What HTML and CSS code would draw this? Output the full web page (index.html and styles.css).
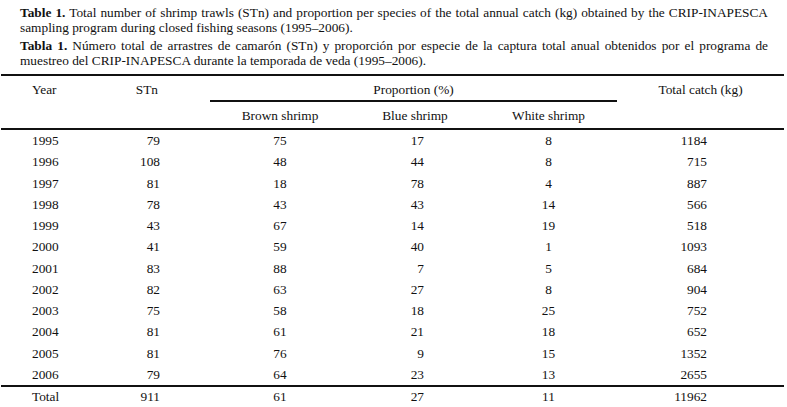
FILE: index.html
```html
<!DOCTYPE html>
<html lang="en">
<head>
<meta charset="utf-8">
<title>Table 1</title>
<link rel="stylesheet" href="styles.css">
</head>
<body>
<div class="caption">
  <p class="cap"><span class="line just"><b>Table 1.</b> Total number of shrimp trawls (STn) and proportion per species of the total annual catch (kg) obtained by the CRIP-INAPESCA</span><span class="line">sampling program during closed fishing seasons (1995–2006).</span></p>
  <p class="cap" lang="es"><span class="line just"><b>Tabla 1.</b> Número total de arrastres de camarón (STn) y proporción por especie de la captura total anual obtenidos por el programa de</span><span class="line">muestreo del CRIP-INAPESCA durante la temporada de veda (1995–2006).</span></p>
</div>
<table class="data">
  <colgroup>
    <col class="c-year"><col class="c-stn"><col class="c-brown"><col class="c-blue"><col class="c-white"><col class="c-total">
  </colgroup>
  <thead>
    <tr class="hrow1">
      <th rowspan="2" class="hs h-year">Year</th>
      <th rowspan="2" class="hs h-stn">STn</th>
      <th colspan="3" class="hg">Proportion (%)</th>
      <th rowspan="2" class="hs h-total">Total catch (kg)</th>
    </tr>
    <tr class="hrow2">
      <th class="hsub">Brown shrimp</th>
      <th class="hsub">Blue shrimp</th>
      <th class="hsub">White shrimp</th>
    </tr>
  </thead>
  <tbody>
    <tr><td class="year">1995</td><td class="stn">79</td><td class="brown">75</td><td class="blue">17</td><td class="white">8</td><td class="total">1184</td></tr>
    <tr><td class="year">1996</td><td class="stn">108</td><td class="brown">48</td><td class="blue">44</td><td class="white">8</td><td class="total">715</td></tr>
    <tr><td class="year">1997</td><td class="stn">81</td><td class="brown">18</td><td class="blue">78</td><td class="white">4</td><td class="total">887</td></tr>
    <tr><td class="year">1998</td><td class="stn">78</td><td class="brown">43</td><td class="blue">43</td><td class="white">14</td><td class="total">566</td></tr>
    <tr><td class="year">1999</td><td class="stn">43</td><td class="brown">67</td><td class="blue">14</td><td class="white">19</td><td class="total">518</td></tr>
    <tr><td class="year">2000</td><td class="stn">41</td><td class="brown">59</td><td class="blue">40</td><td class="white">1</td><td class="total">1093</td></tr>
    <tr><td class="year">2001</td><td class="stn">83</td><td class="brown">88</td><td class="blue">7</td><td class="white">5</td><td class="total">684</td></tr>
    <tr><td class="year">2002</td><td class="stn">82</td><td class="brown">63</td><td class="blue">27</td><td class="white">8</td><td class="total">904</td></tr>
    <tr><td class="year">2003</td><td class="stn">75</td><td class="brown">58</td><td class="blue">18</td><td class="white">25</td><td class="total">752</td></tr>
    <tr><td class="year">2004</td><td class="stn">81</td><td class="brown">61</td><td class="blue">21</td><td class="white">18</td><td class="total">652</td></tr>
    <tr><td class="year">2005</td><td class="stn">81</td><td class="brown">76</td><td class="blue">9</td><td class="white">15</td><td class="total">1352</td></tr>
    <tr><td class="year">2006</td><td class="stn">79</td><td class="brown">64</td><td class="blue">23</td><td class="white">13</td><td class="total">2655</td></tr>
  </tbody>
  <tfoot>
    <tr class="sum"><td class="year">Total</td><td class="stn">911</td><td class="brown">61</td><td class="blue">27</td><td class="white">11</td><td class="total">11962</td></tr>
  </tfoot>
</table>
</body>
</html>
```

FILE: styles.css
```css
html, body {
  margin: 0;
  padding: 0;
  background: #ffffff;
}

body {
  font-family: "Liberation Serif", "Times New Roman", "DejaVu Serif", serif;
  font-size: 13.33px;
  color: #111111;
  overflow: hidden;
}

.caption {
  padding: 5px 0 0 20px;
  width: 748px;
}

.cap {
  margin: 0 0 3px 0;
  line-height: 15px;
}

.cap:last-child {
  margin-bottom: 0;
}

.line {
  display: block;
  white-space: nowrap;
}

.line.just {
  text-align: justify;
  text-align-last: justify;
  white-space: normal;
}

.data {
  margin: 6px 0 0 1px;
  width: 783px;
  table-layout: fixed;
  border-collapse: separate;
  border-spacing: 0;
  line-height: 15px;
}

.c-year { width: 104px; }
.c-stn { width: 105px; }
.c-brown { width: 140px; }
.c-blue { width: 130px; }
.c-white { width: 137px; }
.c-total { width: 167px; }

/* header */
.data th.hs,
.data th.hg,
.data th.hsub {
  font-weight: normal;
  box-sizing: border-box;
}

.data th.hs {
  vertical-align: top;
  border-top: 2px solid #111;
  border-bottom: 2px solid #111;
  padding: 6px 0 0 0;
}

.data th.h-year {
  text-align: left;
  padding-left: 31px;
}

.data th.h-stn {
  text-align: right;
  padding-right: 52px;
}

.data th.h-total {
  text-align: center;
}

.data th.hg {
  border-top: 2px solid #111;
  border-bottom: 2px solid #111;
  height: 28px;
  padding: 6px 0 0 0;
  vertical-align: top;
  text-align: center;
}

.data th.hsub {
  text-align: center;
  vertical-align: top;
  border-bottom: 2px solid #111;
  height: 28px;
  padding: 6px 0 0 0;
}

/* body */
.data td {
  padding: 0;
  height: 21.25px;
  line-height: 21.25px;
  vertical-align: middle;
}

.data td.year {
  text-align: left;
  padding-left: 31px;
}

.data td.stn {
  text-align: right;
  padding-right: 50px;
}

.data td.brown {
  text-align: center;
}

.data td.blue {
  text-align: right;
  padding-right: 56px;
}

.data td.white {
  text-align: center;
}

.data td.total {
  text-align: right;
  padding-right: 77px;
}

.data .sum td {
  border-top: 2px solid #111;
  height: 20px;
  line-height: 20px;
}
```
